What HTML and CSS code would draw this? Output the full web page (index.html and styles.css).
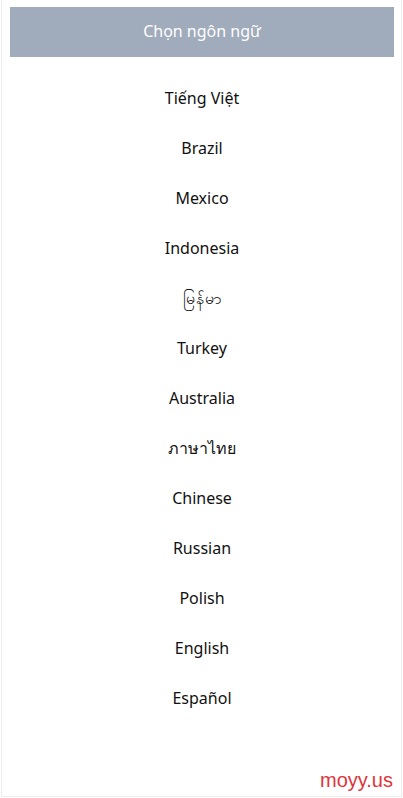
FILE: index.html
```html
<html lang="vi">
<head>
  <meta charset="UTF-8">
  <meta name="viewport" content="width=device-width, initial-scale=1.0">
  <title>Chọn ngôn ngữ</title>
  <link rel="stylesheet" href="styles.css">
</head>
<body>
  <div class="page">
    <div class="header">Chọn ngôn ngữ</div>
    <ul class="lang-list">
      <li>Tiếng Việt</li>
      <li>Brazil</li>
      <li>Mexico</li>
      <li>Indonesia</li>
      <li>မြန်မာ</li>
      <li>Turkey</li>
      <li>Australia</li>
      <li>ภาษาไทย</li>
      <li>Chinese</li>
      <li>Russian</li>
      <li>Polish</li>
      <li>English</li>
      <li>Español</li>
    </ul>
    <div class="watermark">moyy.us</div>
  </div>
</body>
</html>
```

FILE: styles.css
```css
body {
  margin: 0;
  font-family: "Noto Sans", "Open Sans", sans-serif;
  background: #fff;
}

.page {
  position: relative;
  height: 797px;
  margin: 0 1px 0 1px;
  border: 1px solid #ececec;
  border-top: none;
  box-sizing: border-box;
  padding: 7px 7px 0 8px;
}

.header {
  height: 50px;
  line-height: 48px;
  background: #a0abbb;
  color: #fff;
  text-align: center;
  font-size: 16px;
}

.lang-list {
  list-style: none;
  margin: 16px 0 0;
  padding: 0;
}

.lang-list li {
  height: 50px;
  line-height: 50px;
  text-align: center;
  font-size: 16px;
  color: #111;
}

.watermark {
  position: absolute;
  right: 8px;
  bottom: 4px;
  font-family: "Liberation Sans", Arial, sans-serif;
  font-size: 20px;
  color: #e0353b;
}
```
